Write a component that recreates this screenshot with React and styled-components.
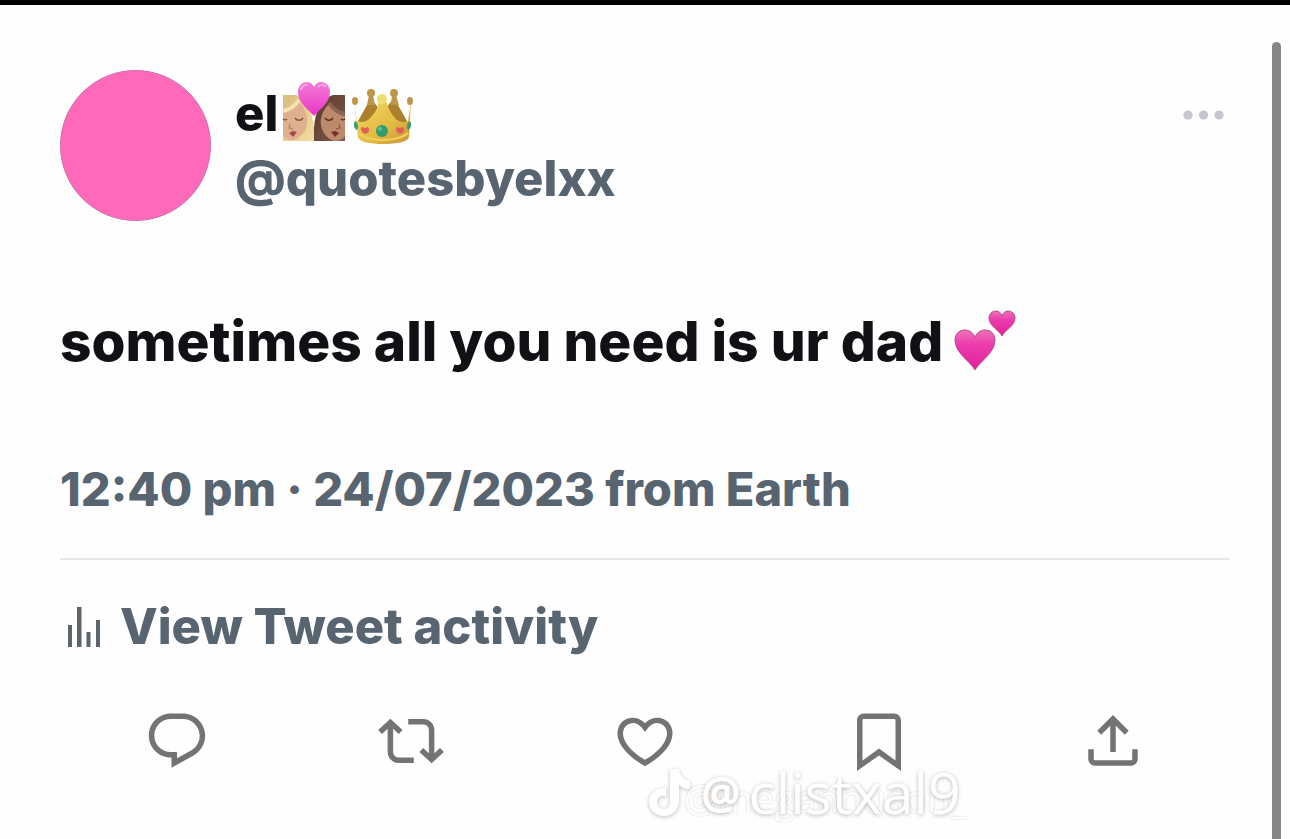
import React from 'react';
import styled, { createGlobalStyle } from 'styled-components';

const GlobalStyle = createGlobalStyle`
  body {
    margin: 0;
    background: #fefefe;
    font-family: Inter, 'Liberation Sans', sans-serif;
  }
`;

const Page = styled.div`
  position: relative;
  display: flex;
  box-sizing: border-box;
  min-height: 100vh;
  border-top: 5px solid #000;
  overflow: hidden;
`;

const Tweet = styled.article`
  flex: 1;
  min-width: 0;
  padding: 65px 42px 60px 60px;
`;

const ScrollThumb = styled.div`
  width: 9px;
  margin: 37px 9px 0 0;
  border-radius: 5px 5px 0 0;
  background: #868686;
`;

const Header = styled.header`
  display: flex;
  align-items: center;
  gap: 24px;
`;

const Avatar = styled.div`
  box-sizing: border-box;
  width: 151px;
  height: 151px;
  border: 1px solid #d06bb0;
  border-radius: 50%;
  background: #ff69b9;
`;

const Author = styled.div`
  flex: 1;
  font-size: 49px;
  font-weight: 800;
  line-height: 65px;
`;

const Name = styled.h1`
  display: flex;
  align-items: center;
  gap: 4px;
  margin: 0;
  color: #0f1114;
  font: inherit;
`;

const Handle = styled.a`
  color: #58646f;
  text-decoration: none;
`;

const IconButton = styled.button`
  display: flex;
  padding: 0;
  border: none;
  background: none;
  color: ${(props) => props.$color || '#737373'};
  cursor: pointer;
`;

const MoreButton = styled(IconButton)`
  align-self: flex-start;
  margin: 36px 6px 0 0;
`;

const Message = styled.p`
  display: flex;
  align-items: center;
  gap: 10px;
  margin: 84px 0 82px;
  color: #0f1114;
  font-size: 55px;
  font-weight: 800;
  line-height: 72px;
`;

const Meta = styled.p`
  margin: 0;
  padding-bottom: 39px;
  border-bottom: 2px solid #e6e8ea;
  color: #58646f;
  font-size: 47px;
  font-weight: 800;
  line-height: 60px;
`;

const Activity = styled.a`
  display: flex;
  align-items: center;
  gap: 12px;
  margin: 37px 0 51px;
  color: #58646f;
  font-size: 49px;
  font-weight: 800;
  line-height: 60px;
  text-decoration: none;
`;

const Actions = styled.div`
  display: grid;
  grid-template-columns: repeat(5, 1fr);
  justify-items: center;
`;

const Emoji = styled.svg`
  flex: none;
  width: 64px;
  height: 64px;
`;

const Watermark = styled.div`
  position: absolute;
  top: 752px;
  left: 50%;
  display: flex;
  align-items: center;
  color: #fff;
  font-family: 'Open Sans', sans-serif;
  font-size: 57px;
  line-height: 70px;
  text-shadow: 0 1px 4px rgba(0, 0, 0, 0.28);
  pointer-events: none;

  & svg {
    filter: drop-shadow(0 1px 2px rgba(0, 0, 0, 0.25));
  }
`;

const WatermarkAt = styled.span`
  margin-right: 8px;
  font-size: 44px;
  font-weight: 700;
`;

const OldWatermark = styled.div`
  position: absolute;
  top: 758px;
  left: 53%;
  color: #fefefe;
  font-family: 'Open Sans', sans-serif;
  font-size: 38px;
  line-height: 70px;
  text-shadow: 0 0 2px rgba(0, 0, 0, 0.18);
  pointer-events: none;
`;

const ICONS = [
  {
    label: 'Reply',
    d: 'M1.751 10c0-4.42 3.584-8 8.005-8h4.366c4.49 0 8.129 3.64 8.129 8.13 0 2.96-1.607 5.68-4.196 7.11l-8.054 4.46v-3.69h-.067c-4.49.1-8.183-3.51-8.183-8.01zm8.005-6c-3.317 0-6.005 2.69-6.005 6 0 3.37 2.77 6.08 6.138 6.01l.351-.01h1.761v2.3l5.087-2.81c1.951-1.08 3.163-3.13 3.163-5.36 0-3.39-2.744-6.13-6.129-6.13H9.756z',
  },
  {
    label: 'Retweet',
    d: 'M4.5 3.88l4.432 4.14-1.364 1.46L5.5 7.55V16c0 1.1.896 2 2 2H13v2H7.5c-2.209 0-4-1.79-4-4V7.55L1.432 9.48.068 8.02 4.5 3.88zM16.5 6H11V4h5.5c2.209 0 4 1.79 4 4v8.45l2.068-1.93 1.364 1.46-4.432 4.14-4.432-4.14 1.364-1.46 2.068 1.93V8c0-1.1-.896-2-2-2z',
  },
  {
    label: 'Like',
    d: 'M16.697 5.5c-1.222-.06-2.679.51-3.89 2.16l-.805 1.09-.806-1.09C9.984 6.01 8.526 5.44 7.304 5.5c-1.243.07-2.349.78-2.91 1.91-.552 1.12-.633 2.78.479 4.82 1.074 1.97 3.257 4.27 7.129 6.61 3.87-2.34 6.052-4.64 7.126-6.61 1.111-2.04 1.03-3.7.477-4.82-.561-1.13-1.666-1.84-2.908-1.91zm4.187 7.69c-1.351 2.48-4.001 5.12-8.379 7.67l-.503.3-.504-.3c-4.379-2.55-7.029-5.19-8.382-7.67-1.36-2.5-1.41-4.86-.514-6.67.887-1.79 2.647-2.91 4.601-3.01 1.651-.09 3.368.56 4.798 2.01 1.429-1.45 3.146-2.1 4.796-2.01 1.954.1 3.714 1.22 4.601 3.01.896 1.81.846 4.17-.514 6.67z',
  },
  {
    label: 'Bookmark',
    d: 'M4 4.5C4 3.12 5.119 2 6.5 2h11C18.881 2 20 3.12 20 4.5v18.44l-8-5.71-8 5.71V4.5zM6.5 4c-.276 0-.5.22-.5.5v14.56l6-4.29 6 4.29V4.5c0-.28-.224-.5-.5-.5h-11z',
  },
  {
    label: 'Share',
    d: 'M12 2.59l5.7 5.7-1.41 1.42L13 6.41V16h-2V6.41l-3.3 3.3-1.41-1.42L12 2.59zM21 15l-.02 3.51c0 1.38-1.12 2.49-2.5 2.49H5.5C4.11 21 3 19.88 3 18.5V15h2v3.5c0 .28.22.5.5.5h12.98c.28 0 .5-.22.5-.5L19 15h2z',
  },
];

const KissEmoji = () => (
  <Emoji viewBox="0 0 64 64" role="img" aria-label="kiss">
    <defs>
      <linearGradient id="kissHeart" x1="0" y1="0" x2="0" y2="1">
        <stop offset="0" stopColor="#f47bd6" />
        <stop offset="1" stopColor="#ea35c6" />
      </linearGradient>
      <linearGradient id="blonde" x1="0" y1="0" x2="1" y2="1">
        <stop offset="0" stopColor="#d8bd80" />
        <stop offset="1" stopColor="#f3dc9f" />
      </linearGradient>
      <linearGradient id="brown" x1="0" y1="0" x2="1" y2="1">
        <stop offset="0" stopColor="#5b3a2c" />
        <stop offset="1" stopColor="#7d5a49" />
      </linearGradient>
    </defs>
    <path d="M1 14h13c10 3 17 18 18 33v13H1z" fill="url(#blonde)" />
    <path d="M1 32c6-1 12-5 16-11 6 6 9 13 8 22-1 8-7 14-13 16-4 0-8-1-11-4z" fill="#dfb08d" />
    <path d="M1 30c6-1 12-5 16-11" fill="none" stroke="#f5e3b4" strokeWidth="4" />
    <path d="M13 37c2 3 6 3 8 0M1 38c1 1 3 1 4 0" fill="none" stroke="#84583f" strokeWidth="1.5" />
    <path d="M8 43l-1 4 4 1" fill="none" stroke="#bd8767" strokeWidth="1.5" />
    <path d="M7 52l4-2 4 1-4 5z" fill="#a34a4b" />
    <path d="M63 14H51C39 18 33 30 32 47v13h31z" fill="url(#brown)" />
    <path d="M63 35c-6-1-12-5-16-12-6 6-9 13-8 21 1 8 7 14 13 16 5 0 8-1 11-5z" fill="#bd8b6c" />
    <path d="M63 33c-7-1-12-5-16-11" fill="none" stroke="#8a6552" strokeWidth="4" />
    <path d="M43 37c2 3 6 3 8 0M59 38c1 1 3 1 4 0" fill="none" stroke="#563020" strokeWidth="1.5" />
    <path d="M57 43l1 4-4 1" fill="none" stroke="#93614a" strokeWidth="1.5" />
    <path d="M49 51l4-1 4 2-4 4z" fill="#792e32" />
    <path
      d="M32 35C26 28 16 22 16 11 16 5 20 1 25 1c3 0 6 2 7 5 1-3 4-5 7-5 5 0 9 4 9 10 0 11-10 17-16 24z"
      fill="url(#kissHeart)"
    />
    <path d="M19 9c1-4 4-6 7-5M36 6c2-3 6-3 8 0" fill="none" stroke="#f9a5e4" strokeWidth="2" />
  </Emoji>
);

const CrownEmoji = () => (
  <Emoji viewBox="-1 -6 64 64" role="img" aria-label="crown">
    <defs>
      <linearGradient id="gold" x1="0" y1="0" x2="1" y2="1">
        <stop offset="0" stopColor="#f2dc60" />
        <stop offset="0.6" stopColor="#e3b944" />
        <stop offset="1" stopColor="#c89236" />
      </linearGradient>
    </defs>
    <path d="M7 34L20 11l11 15 12-15 13 23-8 9H16z" fill="#ab7f2c" />
    <path d="M3 14l3 20c5 2 10 1 14-4 5-5 7-10 8-16h7c2 6 4 11 8 16 4 5 9 6 14 4l3-20-2 36c-1 5-13 7-26 7S8 55 7 50z" fill="url(#gold)" />
    <path d="M7 46c4 4 14 7 25 7s21-3 25-7" fill="none" stroke="#f0d05c" strokeWidth="2" />
    <g fill="#bd9647">
      <ellipse cx="4" cy="14" rx="3" ry="4" />
      <circle cx="20" cy="6" r="4" />
      <path d="M18 8h4l2 10h-8zM41 8h4l3 10h-8z" />
      <circle cx="43" cy="6" r="4" />
      <ellipse cx="59" cy="14" rx="3" ry="4" />
    </g>
    <circle cx="31" cy="12" r="5" fill="#eee070" />
    <circle cx="31" cy="44" r="6" fill="#329b70" />
    <circle cx="29" cy="42" r="2" fill="#66c196" />
    <path d="M14 47c-4-2-5-5-3-7l3 1 3-1c2 3 1 6-3 7zM49 47c-4-2-5-5-3-7l3 1 3-1c2 3 1 6-3 7z" fill="#dd5f55" />
    <path d="M4 34c3 2 4 6 2 9-3-1-4-6-2-9zM59 34c-3 2-4 6-2 9 3-1 4-6 2-9z" fill="#369c75" />
  </Emoji>
);

const HeartsEmoji = () => (
  <Emoji viewBox="0 0 64 64" role="img" aria-label="two hearts">
    <defs>
      <linearGradient id="pink" x1="0" y1="0" x2="0" y2="1">
        <stop offset="0" stopColor="#ee75b8" />
        <stop offset="0.35" stopColor="#ec3cad" />
        <stop offset="1" stopColor="#e3209b" />
      </linearGradient>
    </defs>
    <g fill="url(#pink)" stroke="#b64c8d">
      <path d="M22 61C17 52 2 44 2 31c0-6 4-10 10-10 5 0 8 3 10 7 2-4 5-7 10-7 6 0 10 4 10 10 0 13-15 21-20 30z" />
      <path d="M49 27c-3-6-13-10-13-18 0-4 3-7 7-7 3 0 5 2 6 5 1-3 3-5 6-5 4 0 7 3 7 7 0 8-10 12-13 18z" />
    </g>
  </Emoji>
);

const App = () => {
  return (
    <>
      <GlobalStyle />
      <Page>
        <Tweet>
          <Header>
            <Avatar />
            <Author>
              <Name>
                el
                <KissEmoji />
                <CrownEmoji />
              </Name>
              <Handle href="#profile">@quotesbyelxx</Handle>
            </Author>
            <MoreButton type="button" aria-label="More" $color="#c3c5d0">
              <svg width="42" height="18" viewBox="0 0 42 18" fill="currentColor">
                <circle cx="6" cy="9" r="4.6" />
                <circle cx="21.5" cy="9" r="4.6" />
                <circle cx="37" cy="9" r="4.6" />
              </svg>
            </MoreButton>
          </Header>

          <Message>
            sometimes all you need is ur dad
            <HeartsEmoji />
          </Message>

          <Meta>12:40 pm · 24/07/2023 from Earth</Meta>

          <Activity href="#activity">
            <svg width="48" height="48" viewBox="0 0 48 48" fill="#5d646c" aria-hidden="true">
              <path d="M8 22h4v22H8zM17 4h4.5v40H17zM26.5 29h4v15h-4zM36 17h4v27h-4z" />
            </svg>
            View Tweet activity
          </Activity>

          <Actions>
            {ICONS.map((icon) => (
              <IconButton key={icon.label} type="button" aria-label={icon.label}>
                <svg width="66" height="66" viewBox="0 0 24 24" fill="currentColor">
                  <path d={icon.d} />
                </svg>
              </IconButton>
            ))}
          </Actions>
        </Tweet>
        <ScrollThumb />

        <OldWatermark>@meganhuson_</OldWatermark>
        <Watermark>
          <svg width="56" height="56" viewBox="0 0 56 56" aria-hidden="true">
            <path
              d="M25 5h9c1 7 5 11 11 12v8c-4 0-8-1-11-4v16c0 9-7 15-15 15S4 46 4 38s7-15 17-14v8c-5-1-9 2-9 6s3 7 7 7 6-3 6-8z"
              fill="#fff"
            />
          </svg>
          <WatermarkAt>@</WatermarkAt>
          clistxal9
        </Watermark>
      </Page>
    </>
  );
};

export default App;
